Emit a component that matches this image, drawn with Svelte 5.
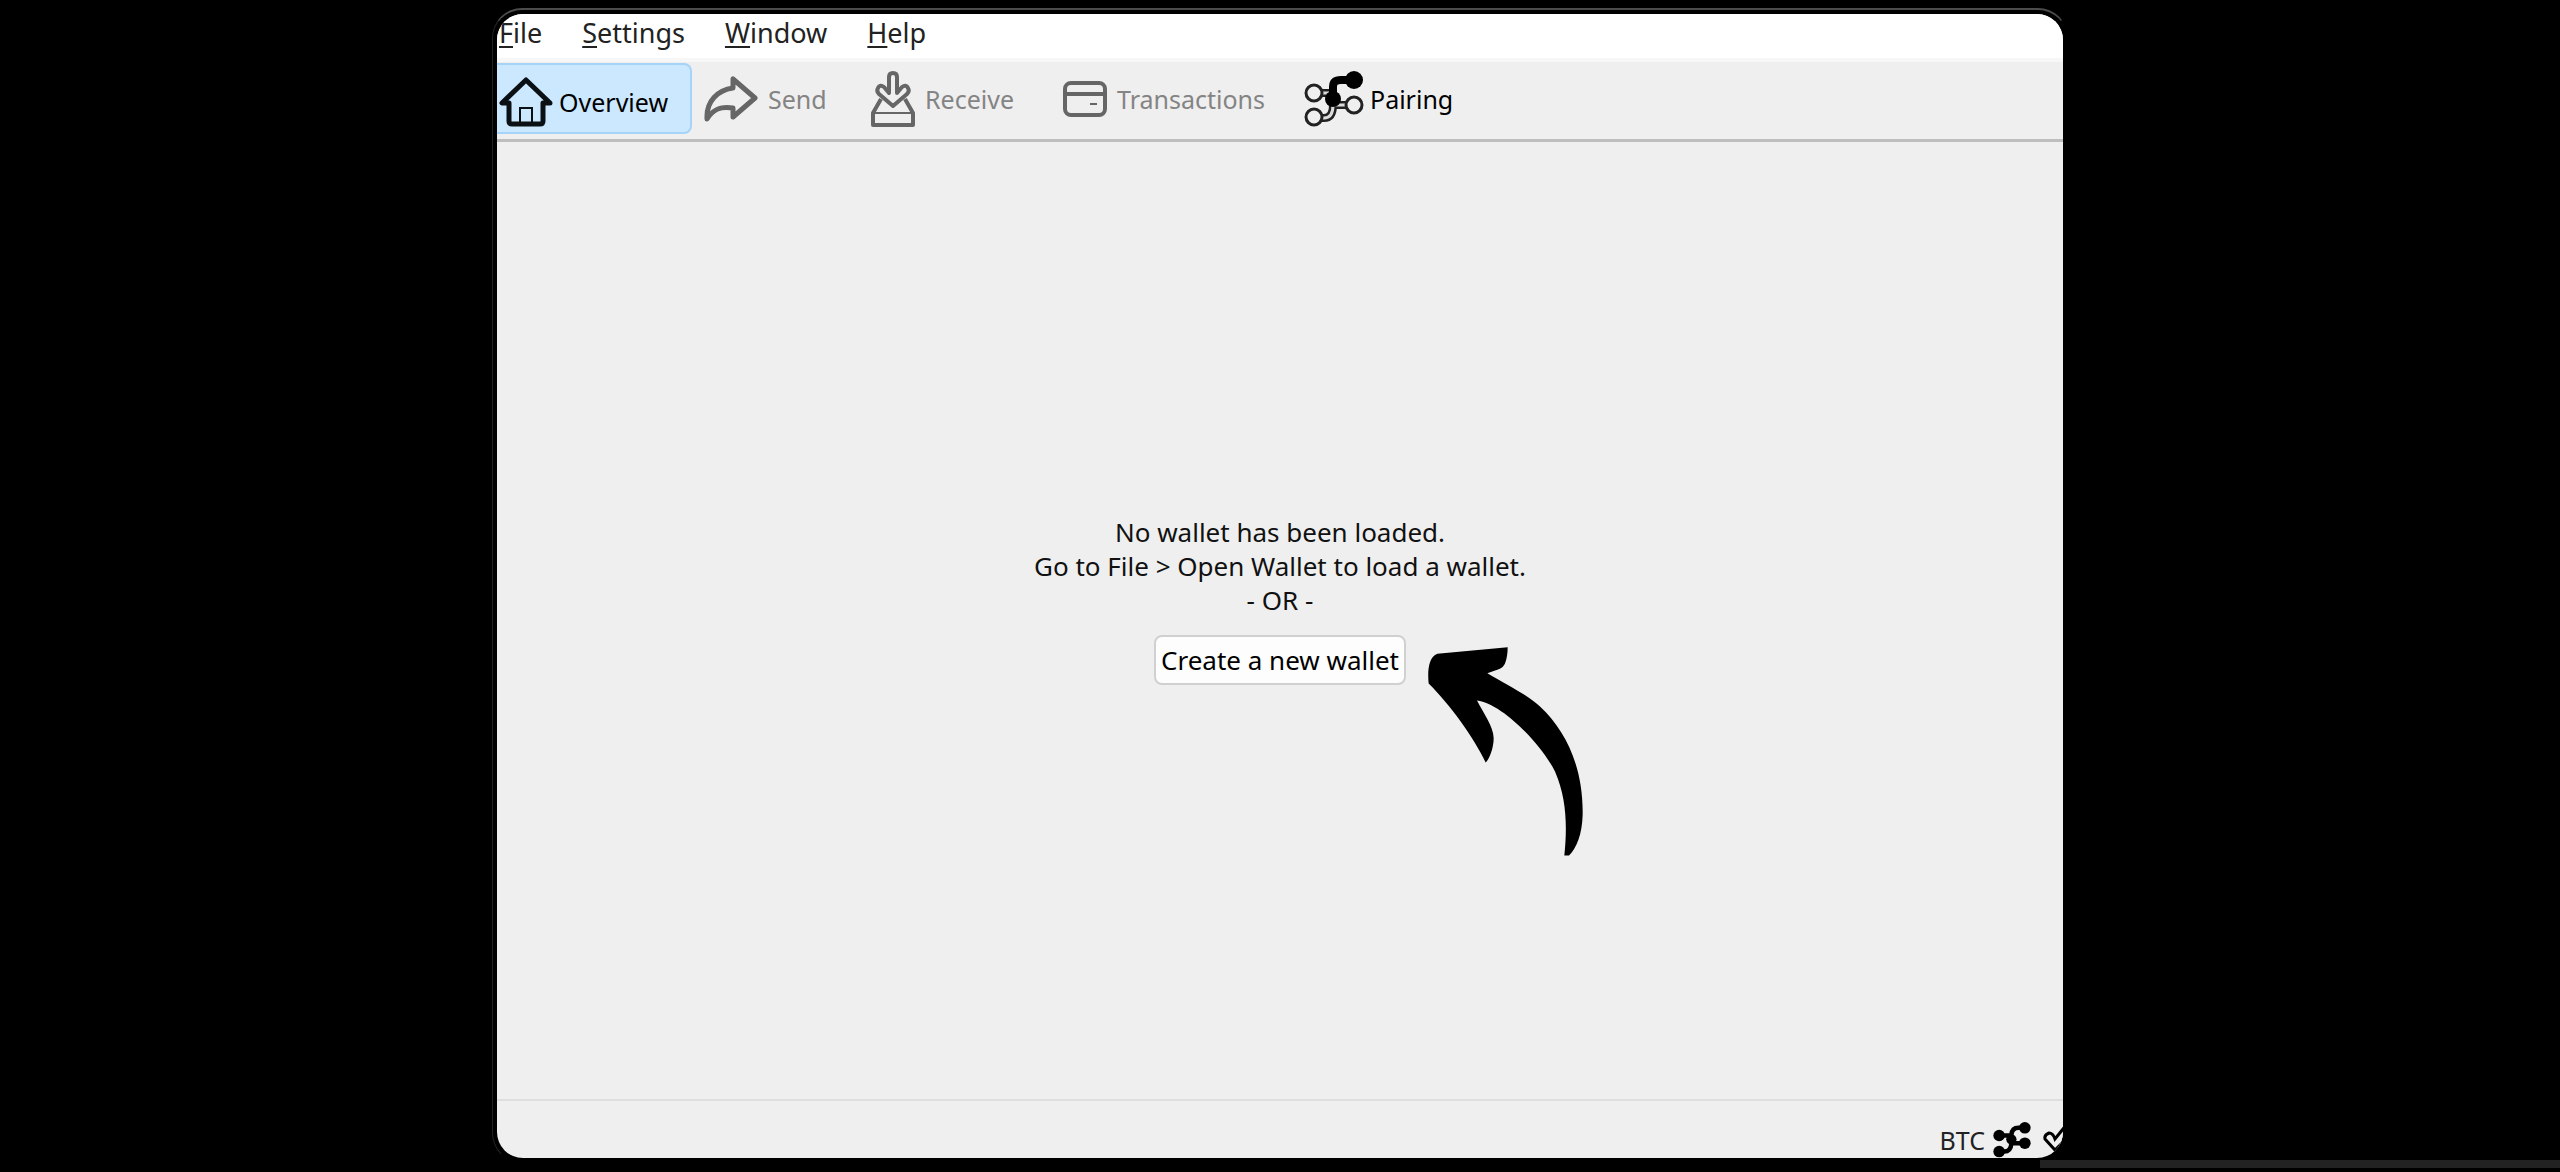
<script>
  const menus = ['File', 'Settings', 'Window', 'Help'];
  let active = $state('overview');
</script>

{#snippet network(solid)}
  <svg class="net" viewBox="0 0 60 56" aria-hidden="true">
    {#if solid}
      <path d="M10 21H26M50 9H40Q30 9 29 20V34Q28 46 18 46H11M28 33H50" fill="none" stroke="#000" stroke-width="7" />
      <circle cx="10" cy="21" r="9" /><circle cx="10" cy="46" r="9" />
      <circle cx="50" cy="9" r="9" /><circle cx="50" cy="33" r="9" /><circle cx="29" cy="27" r="8" />
    {:else}
      <path d="M15 22H28M30 34H44M15 47H20Q29 47 29 34" fill="none" stroke="#222" stroke-width="8" />
      <path d="M15 22H28M30 34H44M15 47H20Q29 47 29 34" fill="none" stroke="#dcdcdc" stroke-width="3" />
      <g fill="#efefef" stroke="#222" stroke-width="3">
        <circle cx="10" cy="22" r="8" /><circle cx="10" cy="46" r="8" /><circle cx="50" cy="34" r="8" />
      </g>
      <path d="M29 28V16Q29 9 37 9H50" fill="none" stroke="#000" stroke-width="8" />
      <circle cx="29" cy="28" r="8" /><circle cx="50" cy="9" r="9" />
    {/if}
  </svg>
{/snippet}

<div class="desktop">
  <div class="frame">
    <main class="window">
      <nav class="menubar" aria-label="Main menu">
        {#each menus as menu}
          <button><u>{menu[0]}</u>{menu.slice(1)}</button>
        {/each}
      </nav>

      <div class="toolbar" role="toolbar" aria-label="Views">
        <button class="tool close" class:active={active === 'overview'} onclick={() => (active = 'overview')}>
          <svg class="home" viewBox="0 0 54 50" aria-hidden="true" fill="none" stroke="#0a1014" stroke-linejoin="round">
            <path d="M27 3L3 26H10V44Q10 47 13 47H41Q44 47 44 44V26H51Z" stroke-width="5" />
            <path d="M21 46V31H33V46" stroke-width="2" stroke-linejoin="miter" />
          </svg>
          <span>Overview</span>
        </button>
        <button class="tool" disabled>
          <svg class="share" viewBox="0 0 54 46" aria-hidden="true" fill="none" stroke="#666" stroke-width="5" stroke-linejoin="round">
            <path d="M29 3V12C14 14 2 25 3 43C9 33 17 30 29 32V41L51 22Z" />
          </svg>
          <span>Send</span>
        </button>
        <button class="tool" disabled>
          <svg class="inbox" viewBox="0 0 44 56" aria-hidden="true" fill="none" stroke="#666" stroke-width="4" stroke-linejoin="round">
            <path d="M10 28L2 42V54H42V42L34 28" />
            <path d="M3 42H41" stroke-width="2" />
            <path d="M18 22V6Q18 2 22 2Q26 2 26 6V22L31 16Q35 13 37 17Q39 20 36 23L22 35L8 23Q5 20 7 17Q9 13 13 16Z" fill="#efefef" />
          </svg>
          <span>Receive</span>
        </button>
        <button class="tool" disabled>
          <svg class="card" viewBox="0 0 44 36" aria-hidden="true" fill="none" stroke="#666">
            <rect x="2" y="2" width="40" height="32" rx="6" stroke-width="4" />
            <path d="M2 13H42" stroke-width="4" /><path d="M27 23H34" stroke-width="2" />
          </svg>
          <span>Transactions</span>
        </button>
        <button class="tool close" class:active={active === 'pairing'} onclick={() => (active = 'pairing')}>
          {@render network(false)}
          <span>Pairing</span>
        </button>
      </div>

      <section class="content">
        <p>No wallet has been loaded.<br />Go to File &gt; Open Wallet to load a wallet.<br />- OR -</p>
        <div class="action">
          <button class="create">Create a new wallet</button>
          <svg class="arrow" viewBox="84 77 465 626" aria-hidden="true">
            <path d="M112 97L323 77Q323 105 315 126Q310 138 296 143L262 155C330 195 385 222 420 255C500 330 550 440 548 580C546 640 530 680 507 702L493 702C502 615 500 530 465 450C425 370 310 248 231 237C250 275 281 315 281 350C281 380 268 412 257 423C220 345 150 250 86 186C82 150 86 105 112 97Z" />
          </svg>
        </div>
      </section>

      <footer class="status">
        <span>BTC</span>
        {@render network(true)}
        <svg class="check" viewBox="0 0 20 28" aria-hidden="true" fill="#efefef" stroke="#000" stroke-width="3">
          <path d="M24 -2L12 13Q10 7 6 7Q1 9 2 13L12 24L24 12" />
        </svg>
      </footer>
    </main>
  </div>
  <div class="taskline"></div>
</div>

<style>
  :global(body) { background: #000; }
  .desktop {
    position: relative;
    box-sizing: border-box;
    min-height: 100vh;
    padding: 8px 19% 9px;
    background: #000;
    display: flex;
    justify-content: center;
    font-family: "Noto Sans", "Open Sans", sans-serif;
    font-size: 25px;
    line-height: 34px;
    color: #111;
  }
  .frame {
    box-sizing: border-box;
    display: flex;
    width: 100%;
    max-width: 1576px;
    padding: 4px;
    border: 1px solid #000;
    border-left-color: #222;
    border-top: 2px solid #4c4c4c;
    border-radius: 30px;
  }
  .window {
    flex: 1;
    display: flex;
    flex-direction: column;
    overflow: hidden;
    border-radius: 26px;
    background: #efefef;
  }
  button {
    font: inherit;
    color: inherit;
    border: 0;
    padding: 0;
    margin: 0;
    background: none;
  }
  svg { display: block; flex: none; }
  .menubar {
    display: flex;
    align-items: flex-start;
    gap: 40px;
    height: 44px;
    padding-left: 2px;
    background: #fff;
    border-bottom: 4px solid #f7f7f7;
    font-size: 27px;
    line-height: 38px;
    color: #222;
  }
  .menubar u { text-decoration-thickness: 2px; text-underline-offset: 3px; }
  .toolbar {
    display: grid;
    grid-template-columns: 195px 167px 192px 241px auto;
    justify-content: start;
    padding: 1px 0 5px;
    border-bottom: 3px solid #bebebe;
  }
  .tool {
    box-sizing: border-box;
    display: flex;
    align-items: center;
    gap: 10px;
    height: 71px;
    color: #000;
    white-space: nowrap;
  }
  .tool:disabled { color: #848484; }
  .tool + .tool { padding-left: 12px; }
  .tool.close { gap: 6px; }
  .tool.active {
    border: 2px solid #a6d3f8;
    border-left: 0;
    border-radius: 0 8px 8px 0;
    background: #cce8ff;
    padding-left: 2px;
    padding-top: 6px;
  }
  .home { width: 54px; height: 50px; }
  .share { width: 54px; height: 46px; }
  .inbox { width: 44px; height: 56px; }
  .card { width: 44px; height: 36px; }
  .tool .net { width: 60px; height: 56px; }
  .content {
    flex: 1;
    display: flex;
    flex-direction: column;
    align-items: center;
    justify-content: center;
    gap: 18px;
    padding-bottom: 42px;
    font-size: 26px;
    text-align: center;
  }
  p { margin: 0; }
  .action { position: relative; }
  .create {
    padding: 6px 5px;
    border: 2px solid #d0d0d0;
    border-radius: 8px;
    background: #fdfdfd;
    color: #000;
  }
  .arrow {
    position: absolute;
    left: calc(100% + 22px);
    top: 12px;
    width: 155px;
    height: 209px;
    pointer-events: none;
  }
  .status {
    display: flex;
    align-items: center;
    justify-content: flex-end;
    gap: 7px;
    height: 36px;
    padding-top: 21px;
    border-top: 2px solid #dedede;
    color: #222;
  }
  .status .net { width: 40px; height: 36px; }
  .check { width: 20px; height: 28px; margin-left: 4px; }
  .taskline {
    position: absolute;
    right: 0;
    bottom: 4px;
    width: 520px;
    height: 8px;
    background: #222;
  }
  @media (max-width: 1100px) {
    .desktop { padding-left: 8px; padding-right: 8px; }
    .toolbar { display: flex; flex-wrap: wrap; }
  }
</style>
